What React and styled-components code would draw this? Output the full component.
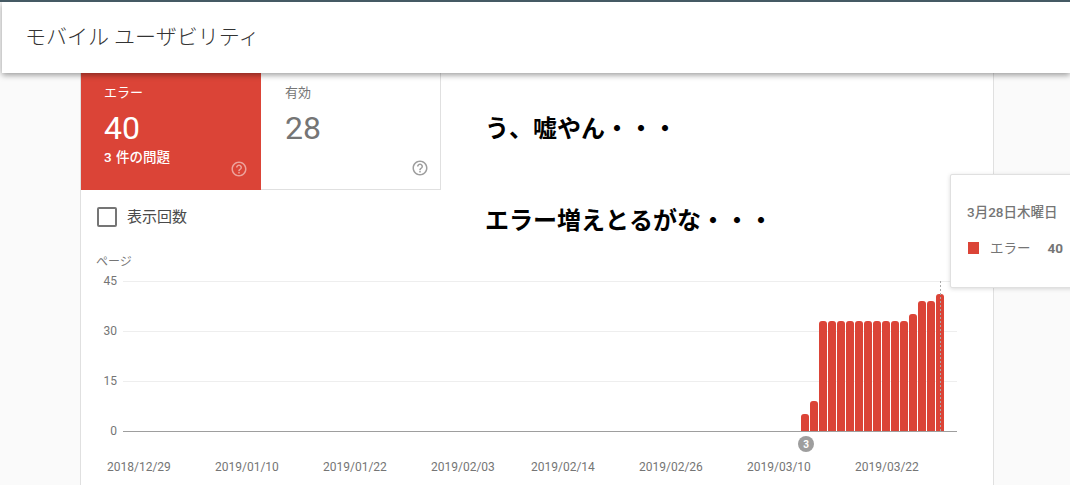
import React from 'react'
import styled, { createGlobalStyle } from 'styled-components'
import { MdHelpOutline } from 'react-icons/md'

const RED = '#db4437'
const FONT = `Roboto, "Noto Sans CJK JP", sans-serif`

const GlobalStyle = createGlobalStyle`
  html, body {
    margin: 0;
    height: 485px;
    overflow: hidden;
    background: #fafafa;
    font-family: ${FONT};
  }
`

const Page = styled.div`
  position: relative;
  width: 1070px;
  height: 485px;
  overflow: hidden;
  border-top: 2px solid #455a64;
  box-sizing: border-box;
`

const Header = styled.header`
  position: relative;
  z-index: 2;
  height: 71px;
  margin-left: 2px;
  padding: 0 0 5px 23px;
  box-sizing: border-box;
  display: flex;
  align-items: center;
  background: #fff;
  box-shadow: 0 2px 6px rgba(0, 0, 0, 0.4);
  font-size: 21px;
  font-weight: 300;
  color: #333;
`

const Card = styled.main`
  position: relative;
  width: 912px;
  height: 412px;
  margin-left: 80px;
  background: #fff;
  border-left: 1px solid #e0e0e0;
  border-right: 1px solid #e0e0e0;
`

const Tabs = styled.div`
  display: flex;
  height: 117px;
`

const Tab = styled.div`
  position: relative;
  width: 180px;
  box-sizing: border-box;
  padding: 10px 23px 0 ${(p) => (p.$active ? '23px' : '24px')};
  color: ${(p) => (p.$active ? '#fff' : '#757575')};
  background: ${(p) => (p.$active ? RED : '#fff')};
  border-right: ${(p) => (p.$active ? 'none' : '1px solid #e0e0e0')};
  border-bottom: ${(p) => (p.$active ? 'none' : '1px solid #e0e0e0')};
`

const TabLabel = styled.div`
  font-size: 13px;
  line-height: 19px;
`

const TabValue = styled.div`
  font-size: 32px;
  line-height: 38px;
  margin-top: 7px;
`

const TabIssues = styled.div`
  font-size: 13.5px;
  font-weight: 500;
  line-height: 18px;
  margin-top: 1px;
  word-spacing: 1px;
`

const HelpIcon = styled(MdHelpOutline)`
  position: absolute;
  right: ${(p) => (p.$active ? '13px' : '11px')};
  bottom: 12px;
  font-size: 18px;
  color: ${(p) => (p.$active ? 'rgba(255, 255, 255, 0.5)' : '#9e9e9e')};
`

const Notes = styled.div`
  position: absolute;
  left: 404px;
  top: 38px;
  display: flex;
  flex-direction: column;
  gap: 56px;
`

const Note = styled.div`
  font-size: 24px;
  font-weight: 700;
  line-height: 36px;
  color: #000;
  white-space: nowrap;
`

const CheckRow = styled.label`
  display: flex;
  align-items: center;
  gap: 10px;
  margin: 17px 0 0 16px;
  font-size: 15px;
  line-height: 20px;
  color: #4a4a4a;
`

const CheckBox = styled.span`
  width: 20px;
  height: 20px;
  box-sizing: border-box;
  border: 2px solid #757575;
  border-radius: 2px;
`

const ChartSvg = styled.svg`
  display: block;
  margin-top: 23px;
  font-family: ${FONT};
`

const AxisText = styled.text`
  font-size: 12px;
  fill: #757575;
`

const Tooltip = styled.aside`
  position: absolute;
  z-index: 1;
  left: 950px;
  top: 172px;
  width: 140px;
  height: 114px;
  box-sizing: border-box;
  padding: 28px 0 0 16px;
  background: #fff;
  border: 1px solid #e0e0e0;
  border-radius: 2px;
  box-shadow: 0 1px 4px rgba(0, 0, 0, 0.15);
  color: #757575;
  font-size: 13.5px;
`

const TooltipDate = styled.div`
  font-weight: 500;
  line-height: 18px;
  white-space: nowrap;
`

const TooltipRow = styled.div`
  display: flex;
  align-items: center;
  margin-top: 18px;
  line-height: 18px;
`

const Swatch = styled.span`
  width: 11px;
  height: 12px;
  margin-left: 1px;
  margin-right: 11px;
  background: ${RED};
`

const TooltipValue = styled.span`
  margin-left: 17px;
  font-weight: 700;
`

// chart coordinates are relative to the card's left edge, y from the svg top
const CHART_TOP = 250
const y = (pageY) => pageY - CHART_TOP
const x = (pageX) => pageX - 81

const gridLines = [
  { label: '45', pageY: 281 },
  { label: '30', pageY: 331 },
  { label: '15', pageY: 381 },
]

const bars = [17, 30, 110, 110, 110, 110, 110, 110, 110, 110, 110, 110, 117, 130, 130, 137]

const dates = [
  ['2018/12/29', 107],
  ['2019/01/10', 215],
  ['2019/01/22', 323],
  ['2019/02/03', 431],
  ['2019/02/14', 531],
  ['2019/02/26', 639],
  ['2019/03/10', 747],
  ['2019/03/22', 855],
]

function Chart() {
  return (
    <ChartSvg width="910" height="235" viewBox="0 0 910 235">
      <AxisText x={x(96)} y={y(266)}>ページ</AxisText>
      {gridLines.map((g) => (
        <g key={g.label}>
          <AxisText x={x(117)} y={y(g.pageY + 4)} textAnchor="end">{g.label}</AxisText>
          <line x1={x(123)} x2={x(957)} y1={y(g.pageY) + 0.5} y2={y(g.pageY) + 0.5} stroke="#eeeeee" />
        </g>
      ))}
      {bars.map((h, i) => {
        const left = x(801 + i * 9)
        const top = y(431) - h
        return (
          <path
            key={i}
            d={`M${left} ${y(431)}V${top + 3}Q${left} ${top} ${left + 3} ${top}H${left + 5}Q${left + 8} ${top} ${left + 8} ${top + 3}V${y(431)}Z`}
            fill={RED}
          />
        )
      })}
      <AxisText x={x(117)} y={y(435)} textAnchor="end">0</AxisText>
      <line x1={x(123)} x2={x(957)} y1={y(431) + 0.5} y2={y(431) + 0.5} stroke="#9e9e9e" />
      <line
        x1={x(940) + 0.5}
        x2={x(940) + 0.5}
        y1={y(281)}
        y2={y(431)}
        stroke="#aaaaaa"
        strokeDasharray="2 2"
      />
      <circle cx={x(806)} cy={y(444)} r="8" fill="#9e9e9e" />
      <text x={x(806)} y={y(448)} textAnchor="middle" fontSize="10" fontWeight="700" fill="#fff">3</text>
      {dates.map(([label, left]) => (
        <AxisText key={label} x={x(left)} y={y(471)}>{label}</AxisText>
      ))}
    </ChartSvg>
  )
}

export default function App() {
  return (
    <Page>
      <GlobalStyle />
      <Header>モバイル ユーザビリティ</Header>
      <Card>
        <Tabs>
          <Tab $active>
            <TabLabel>エラー</TabLabel>
            <TabValue>40</TabValue>
            <TabIssues>3 件の問題</TabIssues>
            <HelpIcon $active />
          </Tab>
          <Tab>
            <TabLabel>有効</TabLabel>
            <TabValue>28</TabValue>
            <HelpIcon />
          </Tab>
        </Tabs>
        <CheckRow>
          <CheckBox />
          表示回数
        </CheckRow>
        <Chart />
        <Notes>
          <Note>う、嘘やん・・・</Note>
          <Note>エラー増えとるがな・・・</Note>
        </Notes>
      </Card>
      <Tooltip>
        <TooltipDate>3月28日木曜日</TooltipDate>
        <TooltipRow>
          <Swatch />
          エラー
          <TooltipValue>40</TooltipValue>
        </TooltipRow>
      </Tooltip>
    </Page>
  )
}
